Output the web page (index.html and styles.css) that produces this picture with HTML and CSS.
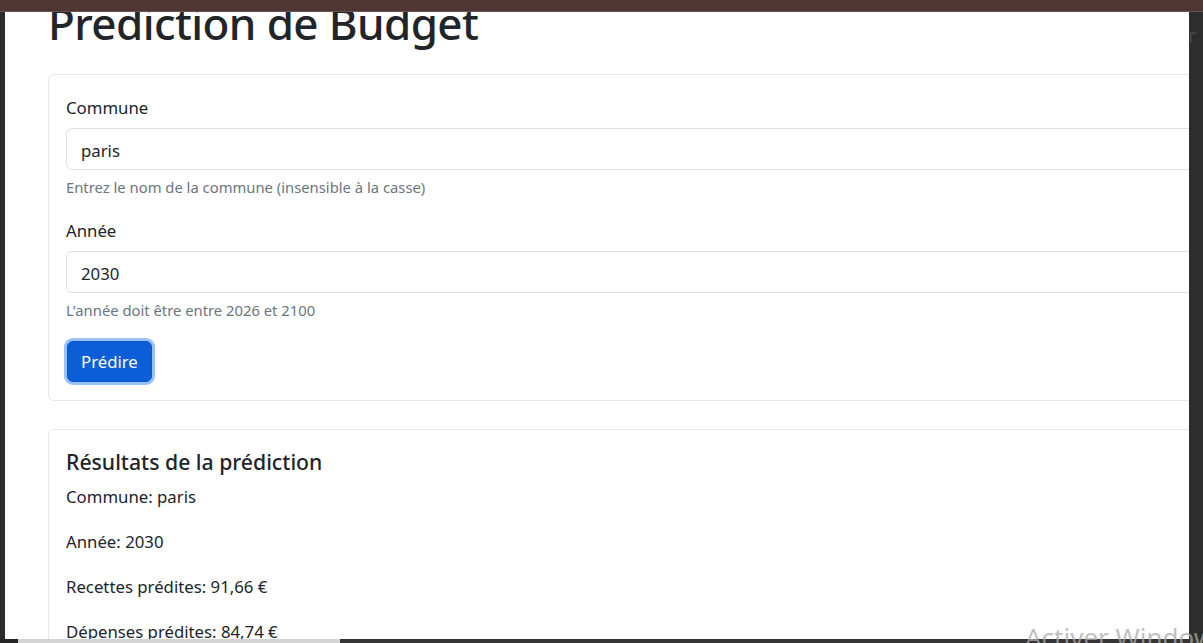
FILE: index.html
```html
<!DOCTYPE html>
<html lang="fr">
<head>
<meta charset="utf-8">
<title>Prediction de Budget</title>
<link rel="stylesheet" href="styles.css">
</head>
<body>
<div class="screen">
  <div class="topbar"></div>
  <div class="middle">
    <div class="strip-left"></div>
    <main class="page">
      <h1 class="title">Prediction de Budget</h1>
      <section class="card">
        <form class="form">
          <div class="group">
            <label class="label">Commune</label>
            <div class="input">paris</div>
            <div class="help">Entrez le nom de la commune (insensible à la casse)</div>
          </div>
          <div class="group">
            <label class="label">Année</label>
            <div class="input">2030</div>
            <div class="help">L'année doit être entre 2026 et 2100</div>
          </div>
          <button type="button" class="btn">Prédire</button>
        </form>
      </section>
      <section class="card card-results">
        <h5 class="results-title">Résultats de la prédiction</h5>
        <p class="line">Commune: paris</p>
        <p class="line">Année: 2030</p>
        <p class="line">Recettes prédites: 91,66 €</p>
        <p class="line">Dépenses prédites: 84,74 €</p>
      </section>
    </main>
    <div class="strip-right"><span class="ghost">r</span></div>
  </div>
  <div class="bottombar">
    <div class="bb-dark1"></div>
    <div class="bb-light"></div>
    <div class="bb-dark2"></div>
  </div>
  <div class="watermark">Activer Windows</div>
</div>
</body>
</html>
```
FILE: styles.css
```css
* { box-sizing: border-box; }
html, body { margin: 0; padding: 0; }
body {
  width: 1203px;
  height: 643px;
  overflow: hidden;
  background: #2b2b2b;
  font-family: "Noto Sans", "Open Sans", sans-serif;
  color: #212529;
}
.screen {
  position: relative;
  width: 1203px;
  height: 643px;
  display: flex;
  flex-direction: column;
  overflow: hidden;
}
.topbar {
  height: 12px;
  background: #4f3533;
  border-bottom: 1px solid #6a5452;
  flex: none;
}
.middle {
  flex: 1;
  display: flex;
  min-height: 0;
}
.strip-left {
  width: 5px;
  background: #2b2b2b;
  flex: none;
}
.strip-right {
  width: 14px;
  background: #2d2d2d;
  flex: none;
  padding-top: 14px;
}
.ghost {
  display: block;
  color: #4a4a4a;
  font-size: 20px;
  line-height: 20px;
  margin-left: -1px;
}
.page {
  flex: 1;
  background: #fff;
  overflow: hidden;
  padding-left: 43px;
}
.title {
  margin: -15px 0 0 0;
  font-size: 44px;
  font-weight: 500;
  line-height: 52.8px;
  white-space: nowrap;
  letter-spacing: -0.6px;
}
.card {
  width: 1200px;
  margin-top: 24px;
  border: 1px solid #e6e8ea;
  border-radius: 6px;
  padding: 20px 17px 18px 17px;
}
.group { margin-bottom: 19px; }
.label {
  display: block;
  font-size: 16.75px;
  line-height: 26px;
  margin-bottom: 7px;
}
.input {
  height: 42px;
  border: 1px solid #dee2e6;
  border-radius: 6px;
  padding: 4px 14px 0 14px;
  font-size: 16.75px;
  line-height: 36px;
}
.help {
  margin-top: 5px;
  font-size: 14.8px;
  line-height: 24px;
  color: #6c757d;
}
.btn {
  display: block;
  margin: 0 0 0 1px;
  height: 41px;
  padding: 0 13px;
  background: #0b5ed7;
  color: #fff;
  border: 1px solid #0a58ca;
  border-radius: 6px;
  font-family: inherit;
  font-size: 16.75px;
  box-shadow: 0 0 0 3px rgba(49, 132, 253, 0.5);
}
.card-results {
  margin-top: 28px;
  padding-top: 19px;
}
.results-title {
  margin: 0 0 9px 0;
  font-size: 21.2px;
  font-weight: 500;
  line-height: 26px;
}
.line {
  margin: 0 0 19px 0;
  font-size: 16.75px;
  line-height: 26px;
}
.bottombar {
  height: 4px;
  display: flex;
  flex: none;
}
.bb-dark1 { width: 18px; background: #262626; }
.bb-light { width: 322px; background: #d4d4d4; }
.bb-dark2 { flex: 1; background: #353535; }
.watermark {
  position: absolute;
  left: 1025px;
  top: 622px;
  font-family: "Noto Sans", sans-serif;
  font-size: 26px;
  line-height: 30px;
  color: rgba(170, 170, 170, 0.75);
  white-space: nowrap;
}
```
